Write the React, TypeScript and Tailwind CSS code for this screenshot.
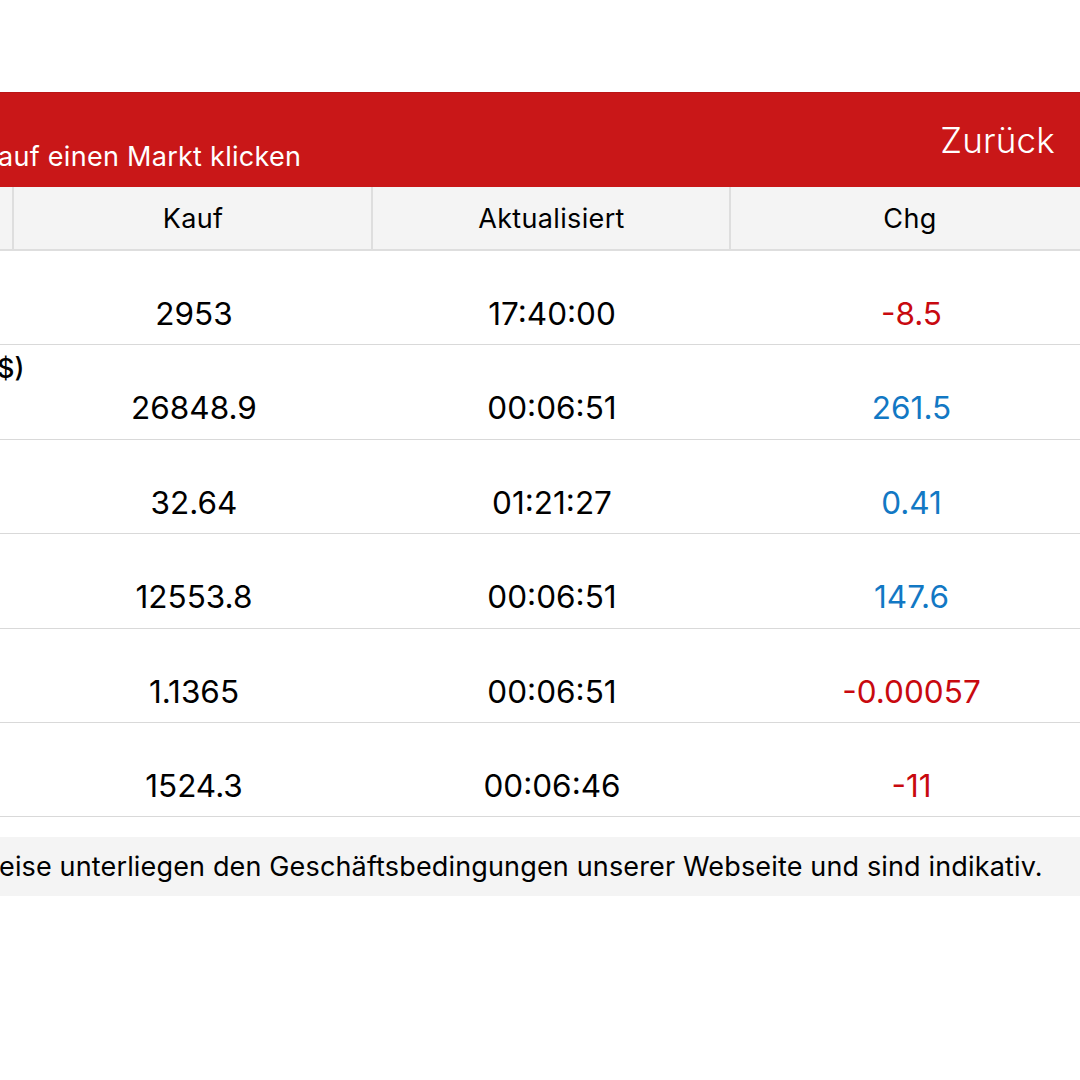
import React from 'react';

type Row = { name?: string; kauf: string; time: string; chg: string; up: boolean };

const rows: Row[] = [
  { kauf: '2953', time: '17:40:00', chg: '-8.5', up: false },
  { name: '$)', kauf: '26848.9', time: '00:06:51', chg: '261.5', up: true },
  { kauf: '32.64', time: '01:21:27', chg: '0.41', up: true },
  { kauf: '12553.8', time: '00:06:51', chg: '147.6', up: true },
  { kauf: '1.1365', time: '00:06:51', chg: '-0.00057', up: false },
  { kauf: '1524.3', time: '00:06:46', chg: '-11', up: false },
];

const App: React.FC = () => {
  return (
    <div className="w-[1080px] h-[1080px] overflow-hidden bg-white pt-[92px] font-['Inter',sans-serif] text-black">
      {/* red title bar */}
      <div className="h-[95px] bg-[#c91718] border-t border-[#b91516] flex justify-between text-white">
        <div className="pt-[48px] text-[27px] leading-[32px] whitespace-nowrap tracking-[0.28px]">
          <span className="block -ml-[2px]">auf einen Markt klicken</span>
        </div>
        <div className="pr-[25px] pt-[26px] text-[35px] leading-[42px] font-light tracking-[0.2px]">Zurück</div>
      </div>

      {/* column headers */}
      <div className="w-[1089px] h-[64px] bg-[#f4f4f4] border-b-2 border-[#dedede] grid grid-cols-[14px_359px_358px_358px] text-[27px] leading-[64px] text-center tracking-[0.35px]">
        <div className="border-r-2 border-[#dedede]" />
        <div className="border-r-2 border-[#dedede] pl-px">Kauf</div>
        <div className="border-r-2 border-[#dedede] pl-px">Aktualisiert</div>
        <div>Chg</div>
      </div>

      {rows.map((row) => (
        <div
          key={row.time + row.kauf}
          className="w-[1092px] h-[94.4px] border-b border-[#d9d9d9] grid grid-cols-[15px_358px_358px_361px] text-[31.5px] leading-[40px] text-center"
        >
          <div className="relative">
            {row.name && (
              <span className="absolute left-0 top-[8px] text-[27px] leading-[32px] font-medium whitespace-nowrap -ml-[3px]">
                {row.name}
              </span>
            )}
          </div>
          <div className="pt-[43px]">{row.kauf}</div>
          <div className="pt-[43px]">{row.time}</div>
          <div className={`pt-[43px] ${row.up ? 'text-[#1278c4]' : 'text-[#c8090f]'}`}>{row.chg}</div>
        </div>
      ))}

      {/* disclaimer */}
      <div className="mt-[20px] h-[59px] bg-[#f4f4f4] text-[27px] leading-[59px] whitespace-nowrap tracking-[0.15px]">
        <span className="block -ml-[1px]">eise unterliegen den Geschäftsbedingungen unserer Webseite und sind indikativ.</span>
      </div>
    </div>
  );
};

export default App;
